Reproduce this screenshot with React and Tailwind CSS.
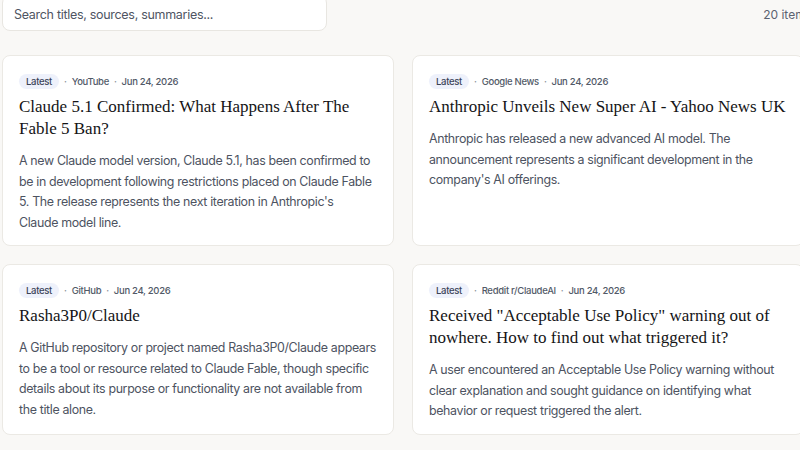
import React from "react";

const items = [
  {
    source: "YouTube",
    date: "Jun 24, 2026",
    title: "Claude 5.1 Confirmed: What Happens After The Fable 5 Ban?",
    summary: [
      "A new Claude model version, Claude 5.1, has been confirmed to be in development following restrictions placed on Claude Fable 5. The release represents the next iteration in Anthropic's",
      "Claude model line.",
    ],
  },
  {
    source: "Google News",
    date: "Jun 24, 2026",
    title: "Anthropic Unveils New Super AI - Yahoo News UK",
    summary: [
      "Anthropic has released a new advanced AI model. The announcement represents a significant development in the company's AI offerings.",
    ],
  },
  {
    source: "GitHub",
    date: "Jun 24, 2026",
    title: "Rasha3P0/Claude",
    summary: [
      "A GitHub repository or project named Rasha3P0/Claude appears to be a tool or resource related to Claude Fable, though specific details about its purpose or functionality are not available from the title alone.",
    ],
  },
  {
    source: "Reddit r/ClaudeAI",
    date: "Jun 24, 2026",
    title: 'Received "Acceptable Use Policy" warning out of nowhere. How to find out what triggered it?',
    summary: [
      "A user encountered an Acceptable Use Policy warning without clear explanation and sought guidance on identifying what behavior or request triggered the alert.",
    ],
  },
];

function Card({ item }) {
  return (
    <div className="bg-white border border-[#ebe9e4] rounded-lg pt-[18px] pb-[12px] px-[16px] flex flex-col">
      <div className="flex items-center text-[9.5px] leading-[14px] tracking-[-0.3px] text-[#525a68] font-medium">
        <span className="bg-[#eef1fb] text-[#3a4257] rounded-full px-[7px] h-[15px] flex items-center">
          Latest
        </span>
        <span className="mx-[5px] text-[#8a909b]">·</span>
        <span>{item.source}</span>
        <span className="mx-[5px] text-[#8a909b]">·</span>
        <span>{item.date}</span>
      </div>
      <h2
        className="mt-[7px] text-[17px] leading-[22px] text-[#141416]"
        style={{ fontFamily: '"Liberation Serif", "DejaVu Serif", serif' }}
      >
        {item.title}
      </h2>
      <p className="mt-[11px] text-[12.4px] leading-[20.5px] tracking-[-0.35px] text-[#4d5361]">
        {item.summary.map((seg, i) => (
          <React.Fragment key={i}>
            {i > 0 && <br />}
            {seg}
          </React.Fragment>
        ))}
      </p>
    </div>
  );
}

export default function App() {
  return (
    <div
      className="w-[800px] h-[450px] overflow-hidden bg-[#f9f8f6]"
      style={{ fontFamily: 'Inter, "Noto Sans", sans-serif' }}
    >
      <div className="w-[820px] pl-[2px]">
        <div className="flex items-center justify-between w-[810px] mt-[-5px]">
          <div className="w-[325px] h-[36px] bg-white border border-[#e8e6e1] rounded-lg flex items-center pl-[11px] pt-[4px] text-[12.5px] tracking-[-0.3px] text-[#4f5563]">
            Search titles, sources, summaries...
          </div>
          <span className="text-[12px] text-[#5b6270] pt-[4px]">20 items</span>
        </div>
        <div className="grid grid-cols-[392px_392px] gap-x-[18px] gap-y-[18px] mt-[24px]">
          {items.map((it, i) => (
            <Card key={i} item={it} />
          ))}
        </div>
      </div>
    </div>
  );
}
